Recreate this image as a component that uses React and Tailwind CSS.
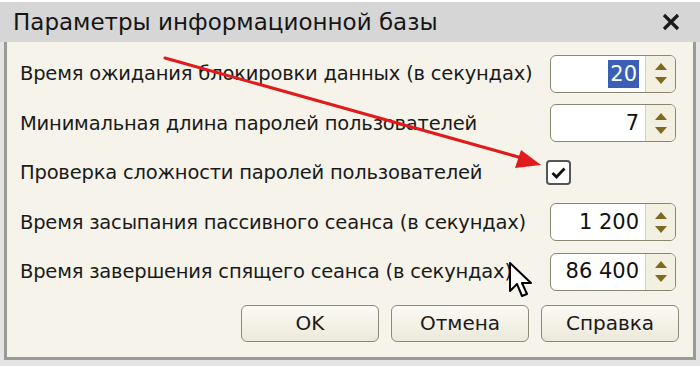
import React from 'react'

const font = { fontFamily: '"DejaVu Sans", "Liberation Sans", sans-serif' }

function Spinner() {
  return (
    <div className="flex w-[30px] flex-col items-center justify-center gap-[7px] border-l border-[#d8d4c4] bg-[#f3f0e2]">
      <svg width="12" height="7" viewBox="0 0 12 7"><path d="M6 0 L12 7 L0 7 Z" fill="#7c6a1e" /></svg>
      <svg width="12" height="7" viewBox="0 0 12 7"><path d="M0 0 L12 0 L6 7 Z" fill="#7c6a1e" /></svg>
    </div>
  )
}

function SpinField({ value, selected }) {
  return (
    <div className="flex h-[38px] w-[126px] overflow-hidden rounded-[6px] border border-[#8a8670] bg-white">
      <div className="flex flex-1 items-center justify-end pr-[6px] text-[21px] text-[#111]">
        {selected ? <span className="bg-[#3a5fb5] px-[2px] leading-[28px] text-white">20</span> : value}
      </div>
      <Spinner />
    </div>
  )
}

function Row({ label, children }) {
  return (
    <div className="flex h-[49.5px] items-center justify-between pl-[13px] pr-[17px]">
      <span className="text-[19.5px] tracking-[-0.2px] text-[#1a1a1a]">{label}</span>
      <div className="flex w-[126px]">{children}</div>
    </div>
  )
}

function Btn({ children }) {
  return (
    <button className="h-[37px] w-[138px] rounded-[6px] border border-[#8d8a78] bg-gradient-to-b from-[#fbfaf5] to-[#ece8da] text-[20px] text-[#1a1a1a]">
      {children}
    </button>
  )
}

export default function App() {
  return (
    <div className="relative h-[366px] w-[700px] overflow-hidden bg-[#e4e4e4]" style={font}>
      <div className="flex h-[42px] items-center justify-between border-t-2 border-white bg-[#d6d6d6] pl-[13px] pr-[20px]">
        <span className="text-[23px] text-[#151515]">Параметры информационной базы</span>
        <svg width="18" height="18" viewBox="0 0 18 18"><path d="M2 2 L16 16 M16 2 L2 16" stroke="#1a1a1a" strokeWidth="3.2" /></svg>
      </div>
      <div className="mx-[4px] h-[318px] border-x-[3px] border-b-[3px] border-[#9a9a9a] bg-[#f6f3ea] pt-[7px]">
        <Row label="Время ожидания блокировки данных (в секундах)">
          <SpinField selected />
        </Row>
        <Row label="Минимальная длина паролей пользователей">
          <SpinField value="7" />
        </Row>
        <Row label="Проверка сложности паролей пользователей">
          <div className="-ml-[4px] flex h-[25px] w-[25px] items-center justify-center rounded-[4px] border-2 border-[#555] bg-white">
            <svg width="15" height="12" viewBox="0 0 15 12"><path d="M1.5 6 L5.5 10 L13.5 1.5" fill="none" stroke="#111" strokeWidth="2.8" /></svg>
          </div>
        </Row>
        <Row label="Время засыпания пассивного сеанса (в секундах)">
          <SpinField value="1 200" />
        </Row>
        <Row label="Время завершения спящего сеанса (в секундах)">
          <SpinField value="86 400" />
        </Row>
        <div className="mt-[8px] flex justify-end gap-[12px] pr-[14px]">
          <Btn>OK</Btn>
          <Btn>Отмена</Btn>
          <Btn>Справка</Btn>
        </div>
      </div>

      {/* red annotation arrow */}
      <svg className="pointer-events-none absolute left-0 top-0" width="700" height="366">
        <line x1="165" y1="58" x2="522" y2="158" stroke="#e01b1b" strokeWidth="3" strokeLinecap="round" />
        <path d="M541 165 L515 168 L521 150 Z" fill="#e01b1b" />
      </svg>

      {/* mouse cursor */}
      <svg className="pointer-events-none absolute left-[509px] top-[262px]" width="26" height="40" viewBox="0 0 26 40">
        <path d="M1 1 L1 29 L8 22 L13 34 L18 32 L13 21 L22 21 Z" fill="white" stroke="black" strokeWidth="2" strokeLinejoin="round" />
      </svg>
    </div>
  )
}
